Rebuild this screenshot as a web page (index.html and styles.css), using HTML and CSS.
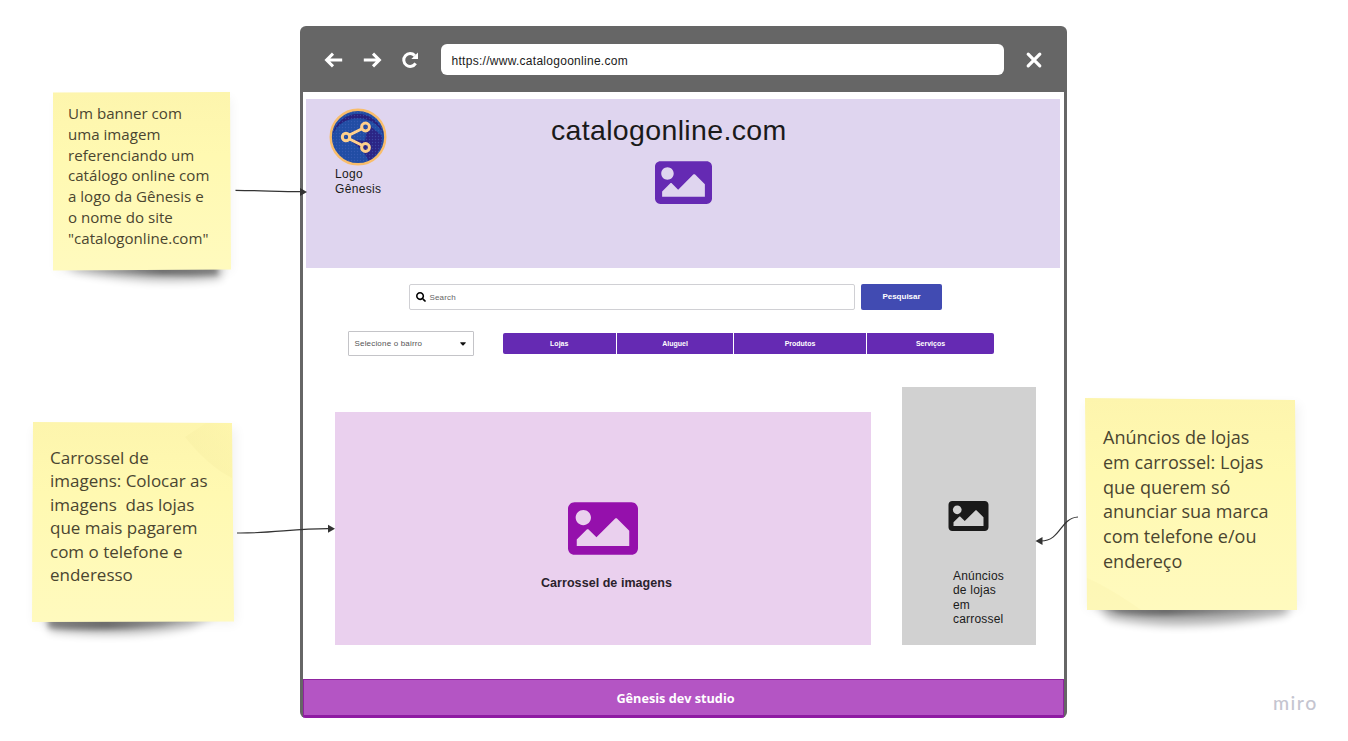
FILE: index.html
```html
<!DOCTYPE html>
<html lang="pt-BR">
<head>
<meta charset="utf-8">
<title>Catálogo online</title>
<link rel="stylesheet" href="styles.css">
</head>
<body>
<svg class="defs" width="0" height="0" aria-hidden="true">
  <defs>
    <linearGradient id="paper" x1="0" y1="0" x2="0" y2="1">
      <stop offset="0" stop-color="#fdf5ad"/><stop offset=".35" stop-color="#fff9b1"/><stop offset="1" stop-color="#fffabe"/>
    </linearGradient>
    <linearGradient id="fold" x1="0" y1="1" x2="1" y2="0">
      <stop offset="0" stop-color="#efe69a" stop-opacity=".5"/><stop offset="1" stop-color="#fff6ab"/>
    </linearGradient>
    <linearGradient id="shade-right" x1="0" y1="0" x2="1" y2="0">
      <stop offset="0" stop-color="#000" stop-opacity="0"/><stop offset=".6" stop-color="#000" stop-opacity=".38"/><stop offset="1" stop-color="#000" stop-opacity=".28"/>
    </linearGradient>
    <linearGradient id="shade-left" x1="0" y1="0" x2="1" y2="0">
      <stop offset="0" stop-color="#000" stop-opacity=".26"/><stop offset=".35" stop-color="#000" stop-opacity=".38"/><stop offset="1" stop-color="#000" stop-opacity="0"/>
    </linearGradient>
    <filter id="soft" x="-20%" y="-100%" width="140%" height="300%"><feGaussianBlur stdDeviation="5"/></filter>
    <filter id="tight" x="-20%" y="-100%" width="140%" height="300%"><feGaussianBlur stdDeviation="2.6"/></filter>
    <filter id="halo" x="-20%" y="-20%" width="140%" height="140%"><feGaussianBlur stdDeviation="6"/></filter>
    <pattern id="dots" width="3" height="3" patternUnits="userSpaceOnUse"><circle cx="1.5" cy="1.5" r=".7" fill="#4a68c0" opacity=".5"/></pattern>
    <symbol id="image" viewBox="0 64 512 384">
      <path fill="currentColor" d="M464 448H48c-26.51 0-48-21.49-48-48V112c0-26.51 21.49-48 48-48h416c26.51 0 48 21.49 48 48v288c0 26.51-21.49 48-48 48zM112 120c-30.928 0-56 25.072-56 56s25.072 56 56 56 56-25.072 56-56-25.072-56-56-56zM64 384h384V272l-87.515-87.515c-4.686-4.686-12.284-4.686-16.971 0L208 320l-55.515-55.515c-4.686-4.686-12.284-4.686-16.971 0L64 336v48z"/>
    </symbol>
  </defs>
</svg>

<main class="board">
  <section class="window">
    <header class="toolbar">
      <svg class="nav-icon" viewBox="0 0 20 20"><path d="M18.2 10H3M9 3.6L2.6 10L9 16.4"/></svg>
      <svg class="nav-icon" viewBox="0 0 20 20"><path d="M1.8 10H17M11 3.6L17.4 10L11 16.4"/></svg>
      <svg class="nav-icon" viewBox="0 0 20 20"><path d="M15.6 13.4A6.4 6.4 0 1 1 14.8 5.6"/><path class="solid" d="M18 2.4V9H11.3Z"/></svg>
      <div class="address">https://www.catalogoonline.com</div>
      <svg class="nav-icon close" viewBox="0 0 20 20"><path d="M4.2 4.2L15.8 15.8M15.8 4.2L4.2 15.8"/></svg>
    </header>

    <div class="page">
      <div class="banner">
        <div class="brand">
          <svg class="logo" viewBox="0 0 58 58">
            <circle cx="29" cy="29" r="27.4" fill="#214da4"/>
            <path d="M39 16L53 28A27 27 0 0 1 40 53L34 43L20 31L36 33Z" fill="#2b2585"/>
            <path d="M3.500 27A26 26 0 0 1 54.500 27A27 25 0 0 0 3.500 27Z" fill="#27217d"/>
            <circle cx="29" cy="29" r="27" fill="url(#dots)"/>
            <circle cx="29" cy="29" r="27.300" fill="none" stroke="#f9bd6b" stroke-width="2.400"/>
            <g fill="none" stroke="#ffd08b" stroke-width="3"><path d="M20.500 27L33.500 20.500M20.500 31L33.500 37.500"/><circle cx="17" cy="29" r="3.700"/><circle cx="36.500" cy="19" r="3.900"/><circle cx="36.500" cy="39.500" r="3.900"/></g>
          </svg>
          <p class="brand-name">Logo<br>Gênesis</p>
        </div>
        <div class="headline">
          <h1 class="site-name">catalogonline.com</h1>
          <svg class="banner-image"><use href="#image"/></svg>
        </div>
      </div>

      <div class="search-row">
        <div class="search">
          <svg class="search-icon" viewBox="0 0 512 512"><path d="M505 442.700L405.300 343c-4.500-4.500-10.600-7-17-7H372c27.600-35.300 44-79.700 44-128C416 93.100 322.900 0 208 0S0 93.100 0 208s93.100 208 208 208c48.300 0 92.700-16.400 128-44v16.300c0 6.400 2.500 12.500 7 17l99.700 99.700c9.400 9.400 24.600 9.400 33.900 0l28.300-28.300c9.400-9.400 9.400-24.600.1-34zM208 336c-70.700 0-128-57.200-128-128 0-70.700 57.200-128 128-128 70.700 0 128 57.200 128 128 0 70.700-57.200 128-128 128z"/></svg>
          <span>Search</span>
        </div>
        <div class="search-button">Pesquisar</div>
      </div>

      <div class="filter-row">
        <div class="select"><span>Selecione o bairro</span>
          <svg class="caret" viewBox="0 0 6 4"><path d="M.3 .3H5.700V1L3.400 3.500H2.600L.3 1Z"/></svg>
        </div>
        <nav class="tabs"><span>Lojas</span><span>Aluguel</span><span>Produtos</span><span>Serviços</span></nav>
      </div>

      <div class="content">
        <div class="carousel">
          <svg class="carousel-image"><use href="#image"/></svg>
          <p class="carousel-label">Carrossel de imagens</p>
        </div>
        <aside class="ads">
          <svg class="ads-image"><use href="#image"/></svg>
          <p class="ads-label">Anúncios<br>de lojas<br>em<br>carrossel</p>
        </aside>
      </div>
      <footer class="footer">Gênesis dev studio</footer>
    </div>
  </section>

  <article class="note note-banner">
    <svg class="paper" viewBox="0 0 178 179">
      <rect x="4" y="6" width="174" height="174" fill="#000" opacity=".05" filter="url(#halo)"/>
      <path d="M12 172H168V186Q100 194 22 179Z" fill="#000" opacity=".3" filter="url(#soft)"/>
      <path d="M24 172H164L165 183Q110 185 24 178Z" fill="url(#shade-right)" filter="url(#tight)"/>
      <path d="M0 .5L177 0L178 177.500L0 178.500Z" fill="url(#paper)"/>
    </svg>
    <p>Um banner com<br>uma imagem<br>referenciando um<br>catálogo online com<br>a logo da Gênesis e<br>o nome do site<br>"catalogonline.com"</p>
  </article>

  <article class="note note-carousel">
    <svg class="paper" viewBox="0 0 202 200">
      <rect x="2" y="6" width="202" height="196" fill="#000" opacity=".05" filter="url(#halo)"/>
      <path d="M14 192H185L160 204Q100 217 18 209Z" fill="#000" opacity=".3" filter="url(#soft)"/>
      <path d="M16 192H180L130 204Q70 210 16 206Z" fill="url(#shade-left)" filter="url(#tight)"/>
      <path d="M1 0L200 1L202 199.500L0 200Z" fill="url(#paper)"/>
      <path d="M153 15L174 1L200 1L200 56Q176 44 153 15Z" fill="url(#fold)" opacity=".5"/>
    </svg>
    <p>Carrossel de<br>imagens: Colocar as<br>imagens&nbsp; das lojas<br>que mais pagarem<br>com o telefone e<br>enderesso</p>
  </article>

  <article class="note note-ads">
    <svg class="paper" viewBox="0 0 212 212">
      <rect x="2" y="6" width="212" height="206" fill="#000" opacity=".05" filter="url(#halo)"/>
      <path d="M10 204H204L202 216Q100 236 24 220Z" fill="#000" opacity=".32" filter="url(#soft)"/>
      <path d="M14 206H206L160 214Q70 220 34 215Z" fill="url(#shade-left)" filter="url(#tight)"/>
      <path d="M0 0L210 2L212 212L2 212Z" fill="url(#paper)"/>
      <path d="M2 180Q25 190 56 212H2Z" fill="#f5eca4" opacity=".22"/>
    </svg>
    <p>Anúncios de lojas<br>em carrossel: Lojas<br>que querem só<br>anunciar sua marca<br>com telefone e/ou<br>endereço</p>
  </article>

  <svg class="connectors" viewBox="0 0 1348 741">
    <path d="M235.500 190.300C260 190.600 280 191.500 301 191.700"/>
    <path class="head" d="M307 192L300 188V196Z"/>
    <path d="M237 533C270 533.500 295 528.500 329 528.700"/>
    <path class="head" d="M335 528.800L328 524.800V532.800Z"/>
    <path d="M1078 517C1060 518 1061 541 1041 541"/>
    <path class="head" d="M1035.500 541L1042.500 537V545Z"/>
  </svg>

  <div class="watermark">miro</div>
</main>
</body>
</html>
```
FILE: styles.css
```css
* { box-sizing: border-box; }
body { margin: 0; background: #fff; font-family: "Liberation Sans", Arial, sans-serif; color: #1a1a1a; }
p, h1 { margin: 0; font-weight: 400; }
svg { display: block; flex: none; }
.defs { position: absolute; }
.board { position: relative; width: 1348px; height: 741px; overflow: hidden; background: #fff; }

/* Browser window */
.window { position: absolute; left: 299.5px; top: 26px; width: 767px; height: 692px; border-radius: 6px; background: #666; overflow: hidden; }
.toolbar { display: flex; align-items: center; height: 66px; padding: 1px 22.500px 0 24.500px; }
.nav-icon { width: 20px; height: 20px; margin-right: 18px; fill: none; stroke: #fff; stroke-width: 3; }
.nav-icon .solid { fill: #fff; stroke: none; }
.close { margin: 0; stroke-width: 3.200; stroke-linecap: round; }
.address { flex: 1; height: 31px; margin: 0 20px 0 3px; padding-left: 10.500px; border-radius: 6px; background: #fff; font-size: 12px; line-height: 34px; letter-spacing: .28px; }
.page { display: flex; flex-direction: column; height: 626px; margin: 0 3px; background: #fff; }

.banner { display: grid; grid-template-columns: 102px 550px 102px; height: 169px; margin: 6.500px 3.500px 0; background: #dfd5ef; }
.brand { padding: 9.500px 0 0 22.500px; }
.logo { width: 58px; height: 58px; }
.brand-name { margin-top: 1px; padding-left: 6.500px; font-size: 12px; line-height: 14.600px; letter-spacing: .35px; }
.headline { display: flex; flex-direction: column; align-items: center; padding-top: 14px; }
.site-name { margin-right: 28.500px; font-size: 28.500px; line-height: 34px; letter-spacing: .35px; }
.banner-image { width: 57px; height: 43px; margin-top: 14px; color: #652ab3; }

.search-row { display: flex; gap: 6px; margin: 16.500px 0 0 106.500px; font-size: 8px; }
.search { display: flex; align-items: center; gap: 3.500px; width: 446px; height: 26px; padding-left: 6px; border: 1px solid #d0d0d4; border-radius: 2px; color: #666; letter-spacing: .15px; }
.search-icon { width: 10px; height: 10px; fill: #000; }
.search-button { width: 81px; height: 26px; border-radius: 2px; background: #414bb2; color: #fff; font-weight: 700; line-height: 26px; text-align: center; }
.filter-row { display: flex; align-items: center; gap: 28.500px; margin: 21px 0 0 45.500px; }
.select { display: flex; align-items: center; justify-content: space-between; width: 126px; height: 25px; padding: 0 7px 0 5.500px; border: 1px solid #c4c4c8; border-radius: 1px; color: #555; font-size: 8px; letter-spacing: .18px; }
.caret { width: 6px; height: 4px; fill: #111; }
.tabs { display: grid; grid-template-columns: 113.500px 116px 132px 127px; gap: 1px; height: 21px; border-radius: 2px; overflow: hidden; background: #fff; color: #fff; font-size: 7px; font-weight: 700; line-height: 21px; text-align: center; }
.tabs span { background: #652ab3; }

.content { display: flex; align-items: flex-end; gap: 31px; height: 289px; padding-left: 32.500px; }
.carousel { display: flex; flex-direction: column; align-items: center; width: 536px; height: 233px; padding-top: 90px; background: #ead0ee; }
.carousel-image { width: 70px; height: 53px; color: #9510ac; }
.carousel-label { margin: 20px 0 0 7px; color: #2a222c; font-size: 12.500px; font-weight: 700; line-height: 16px; letter-spacing: .05px; }
.ads { width: 134px; height: 258px; padding: 114px 0 0 46px; background: #d1d1d1; }
.ads-image { width: 41px; height: 30px; color: #1a1a1a; }
.ads-label { margin: 38px 0 0 5px; font-size: 12px; line-height: 14.300px; letter-spacing: .2px; }
.footer { height: 39px; margin-top: auto; padding-right: 15px; border: 1px solid #8f24a0; border-bottom: 3px solid #8f1ba3; background: #b455c4; color: #fff; font: 700 12.700px/37px "Open Sans", sans-serif; text-align: center; }

/* Sticky notes, placed freely on the board */
.note { position: absolute; color: #4a4530; font-family: "Open Sans", sans-serif; font-weight: 300; white-space: nowrap; }
.note p { position: relative; }
.paper { position: absolute; left: 0; top: 0; width: 100%; height: 100%; overflow: visible; }
.note-banner { left: 53px; top: 91.500px; width: 178px; height: 179px; padding: 11.500px 15px; font-size: 15.100px; line-height: 20.800px; }
.note-carousel { left: 32px; top: 422px; width: 202px; height: 200px; padding: 24px 18px; font-size: 17px; line-height: 23.400px; }
.note-ads { left: 1085px; top: 398px; width: 212px; height: 212px; padding: 27px 18px; font-size: 18.050px; line-height: 24.800px; }

.connectors { position: absolute; left: 0; top: 0; width: 1348px; height: 741px; fill: none; stroke: #333; stroke-width: 1.200; }
.connectors .head { fill: #333; stroke: none; }
.watermark { position: absolute; left: 1273px; top: 690px; color: #c5c5d0; font: 500 19.500px/26px Lato, sans-serif; letter-spacing: 1.500px; }
```
